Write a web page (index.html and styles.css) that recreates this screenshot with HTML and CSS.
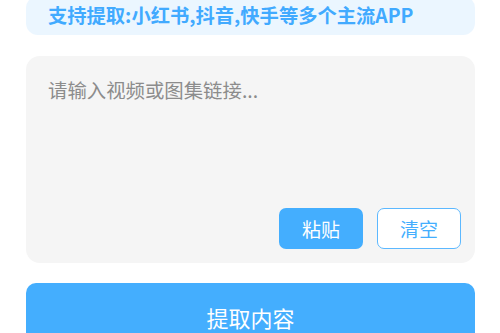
FILE: index.html
```html
<!DOCTYPE html>
<html lang="zh">
<head>
<meta charset="utf-8">
<link rel="stylesheet" href="styles.css">
</head>
<body>
<div class="page">
  <div class="banner">支持提取:小红书,抖音,快手等多个主流APP</div>
  <div class="input-box">
    <div class="placeholder">请输入视频或图集链接...</div>
    <div class="actions">
      <button class="btn btn-fill">粘贴</button>
      <button class="btn btn-outline">清空</button>
    </div>
  </div>
  <button class="extract">提取内容</button>
</div>
</body>
</html>
```

FILE: styles.css
```css
html, body {
  margin: 0;
  padding: 0;
  background: #ffffff;
  overflow: hidden;
}
body {
  font-family: "Noto Sans CJK SC", "Noto Sans", sans-serif;
}
.page {
  display: flex;
  flex-direction: column;
  padding: 0 25px 0 26px;
  margin-top: -4px;
}
.banner {
  height: 38.5px;
  box-sizing: border-box;
  background: #ebf6ff;
  border-radius: 12px;
  color: #41aaff;
  font-weight: 700;
  font-size: 19.3px;
  line-height: 38.5px;
  padding-left: 22px;
  white-space: nowrap;
}
.input-box {
  margin-top: 21px;
  height: 207px;
  box-sizing: border-box;
  background: #f5f5f5;
  border-radius: 14px;
  display: flex;
  flex-direction: column;
  justify-content: space-between;
  padding: 21px 14px 13.5px 22px;
}
.placeholder {
  color: #8c8c8c;
  font-size: 19.4px;
  line-height: 26px;
}
.actions {
  display: flex;
  justify-content: flex-end;
  gap: 14px;
}
.btn {
  width: 84px;
  height: 41px;
  box-sizing: border-box;
  border-radius: 7px;
  font-family: "Noto Sans CJK SC", "Noto Sans", sans-serif;
  font-size: 19px;
  line-height: 1;
  padding: 0;
  display: flex;
  align-items: center;
  justify-content: center;
}
.btn-fill {
  background: #44aefe;
  color: #ffffff;
  border: none;
}
.btn-outline {
  background: #ffffff;
  color: #44aefe;
  border: 1.5px solid #5cb8ff;
}
.extract {
  margin-top: 20.5px;
  height: 67px;
  border: none;
  border-radius: 10px;
  background: #44aefe;
  color: #ffffff;
  font-family: "Noto Sans CJK SC", "Noto Sans", sans-serif;
  font-size: 22px;
  line-height: 1;
  padding: 0;
}
```
